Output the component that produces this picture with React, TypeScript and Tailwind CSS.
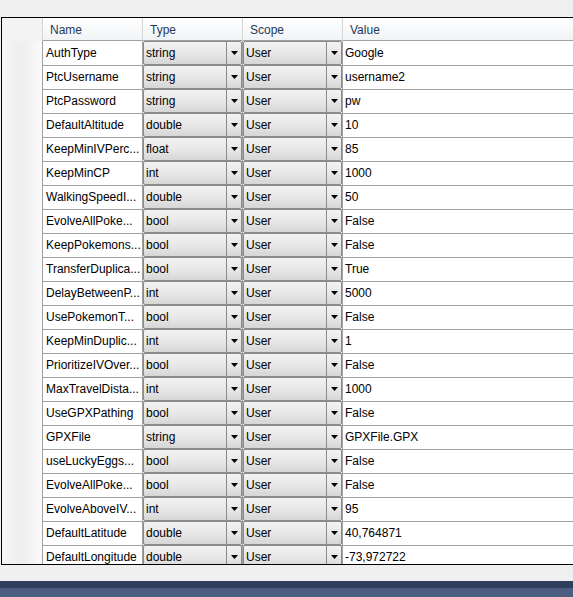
import React from 'react';

type Setting = { name: string; type: string; scope: string; value: string };

const settings: Setting[] = [
  { name: 'AuthType', type: 'string', scope: 'User', value: 'Google' },
  { name: 'PtcUsername', type: 'string', scope: 'User', value: 'username2' },
  { name: 'PtcPassword', type: 'string', scope: 'User', value: 'pw' },
  { name: 'DefaultAltitude', type: 'double', scope: 'User', value: '10' },
  { name: 'KeepMinIVPerc...', type: 'float', scope: 'User', value: '85' },
  { name: 'KeepMinCP', type: 'int', scope: 'User', value: '1000' },
  { name: 'WalkingSpeedI...', type: 'double', scope: 'User', value: '50' },
  { name: 'EvolveAllPoke...', type: 'bool', scope: 'User', value: 'False' },
  { name: 'KeepPokemons...', type: 'bool', scope: 'User', value: 'False' },
  { name: 'TransferDuplica...', type: 'bool', scope: 'User', value: 'True' },
  { name: 'DelayBetweenP...', type: 'int', scope: 'User', value: '5000' },
  { name: 'UsePokemonT...', type: 'bool', scope: 'User', value: 'False' },
  { name: 'KeepMinDuplic...', type: 'int', scope: 'User', value: '1' },
  { name: 'PrioritizeIVOver...', type: 'bool', scope: 'User', value: 'False' },
  { name: 'MaxTravelDista...', type: 'int', scope: 'User', value: '1000' },
  { name: 'UseGPXPathing', type: 'bool', scope: 'User', value: 'False' },
  { name: 'GPXFile', type: 'string', scope: 'User', value: 'GPXFile.GPX' },
  { name: 'useLuckyEggs...', type: 'bool', scope: 'User', value: 'False' },
  { name: 'EvolveAllPoke...', type: 'bool', scope: 'User', value: 'False' },
  { name: 'EvolveAboveIV...', type: 'int', scope: 'User', value: '95' },
  { name: 'DefaultLatitude', type: 'double', scope: 'User', value: '40,764871' },
  { name: 'DefaultLongitude', type: 'double', scope: 'User', value: '-73,972722' },
];

// Win7-style combo box filling a grid cell
function Combo({ text }: { text: string }) {
  return (
    <div className="flex h-full w-full rounded-[2px] border border-[#8a8a8a] bg-linear-to-b from-[#f3f3f3] via-[#e8e8e8] to-[#d6d6d6]">
      <div className="flex-1 pl-[2px] pt-[1px] leading-[21px] text-black">{text}</div>
      <div className="flex w-[15px] items-center justify-center border-l border-[#8a8a8a]">
        <svg width="7" height="4" viewBox="0 0 7 4">
          <path d="M0 0h7L3.5 4z" fill="#000" />
        </svg>
      </div>
    </div>
  );
}

const cols = 'grid grid-cols-[41px_100px_100px_100px_1fr]';

export default function App() {
  return (
    <div
      className="flex h-[597px] w-[573px] flex-col overflow-hidden bg-[#f0f0f0] text-[12px]"
      style={{ fontFamily: '"Segoe UI", "Liberation Sans", Arial, sans-serif' }}
    >
      <div className="h-[17px] shrink-0" />
      <div className="ml-[1px] h-[548px] w-[620px] shrink-0 overflow-hidden border-t border-b border-l border-black bg-white">
        {/* header */}
        <div className={`${cols} h-[23px] border-b border-[#a0a0a0] bg-linear-to-b from-[#ffffff] to-[#f1f3f6] text-[#1e395b]`}>
          <div className="border-r border-[#d5d5d5] bg-[#f3f3f3]" />
          <div className="border-r border-[#d5d5d5] pl-[7px] pt-[1px] leading-[22px]">Name</div>
          <div className="border-r border-[#d5d5d5] pl-[7px] pt-[1px] leading-[22px]">Type</div>
          <div className="border-r border-[#d5d5d5] pl-[7px] pt-[1px] leading-[22px]">Scope</div>
          <div className="pl-[7px] pt-[1px] leading-[22px]">Value</div>
        </div>
        {settings.map((s, i) => (
          <div key={i} className={`${cols} h-[24px]`}>
            <div className="border-r border-b border-[#a0a0a0] bg-linear-to-r from-[#f6f6f6] via-[#eeeeee] to-[#fbfbfb]" />
            <div className="border-r border-b border-[#a0a0a0] pl-[3px] pt-[1px] leading-[22px] whitespace-nowrap overflow-hidden text-black">
              {s.name}
            </div>
            <div className="border-r border-b border-[#a0a0a0]">
              <Combo text={s.type} />
            </div>
            <div className="border-r border-b border-[#a0a0a0]">
              <Combo text={s.scope} />
            </div>
            <div className="border-b border-[#a0a0a0] pl-[2px] pt-[1px] leading-[22px] text-black">{s.value}</div>
          </div>
        ))}
      </div>
      <div className="h-[16px] shrink-0" />
      <div className="h-[7px] shrink-0 bg-[#2f3e5a]" />
      <div className="flex-1 bg-[#4b5e80]" />
    </div>
  );
}
